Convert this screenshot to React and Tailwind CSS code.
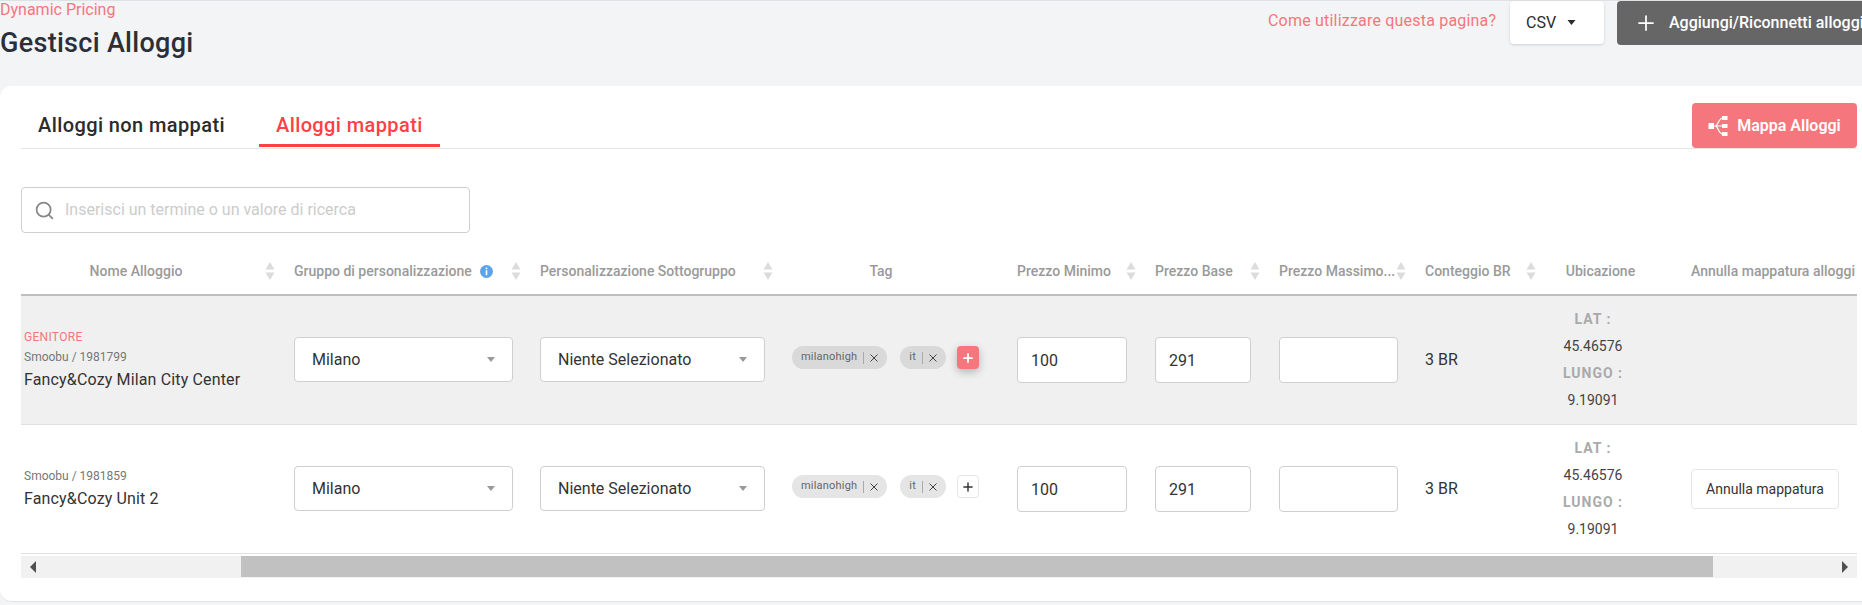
import { Plus, Search } from "lucide-react";

const colsClass =
  "grid grid-cols-[259px_246px_252px_225px_138px_124px_146px_130px_136px_180px]";

const rows = [
  {
    parent: true,
    source: "Smoobu / 1981799",
    name: "Fancy&Cozy Milan City Center",
  },
  {
    parent: false,
    source: "Smoobu / 1981859",
    name: "Fancy&Cozy Unit 2",
  },
];

function SortIcon() {
  return (
    <svg width="10" height="18" viewBox="0 0 10 18" className="shrink-0">
      <path d="M5 0 L9.5 7.5 H0.5 Z" fill="#dcdcdc" />
      <path d="M5 18 L9.5 10.5 H0.5 Z" fill="#dcdcdc" />
    </svg>
  );
}

function Caret({ color = "#999999", w = 8, h = 5 }) {
  return (
    <svg width={w} height={h} viewBox="0 0 8 5" className="shrink-0">
      <path d="M0 0 H8 L4 5 Z" fill={color} />
    </svg>
  );
}

function MapIcon() {
  return (
    <svg width="20" height="22" viewBox="0 0 20 22" fill="none" className="shrink-0">
      <rect x="0.5" y="8" width="5.5" height="6" fill="#fff" />
      <rect x="14" y="1" width="5.5" height="4" fill="#fff" />
      <rect x="14" y="9" width="5.5" height="4" fill="#fff" />
      <rect x="14" y="17" width="5.5" height="4" fill="#fff" />
      <path d="M6 11 H14 M15 3 C11 3 11 8 8 11 C11 14 11 19 15 19" stroke="#fff" strokeWidth="1.2" />
    </svg>
  );
}

function HeaderCell({ label, sort = true, children, textClass = "" }) {
  return (
    <div className="flex items-center pl-[14px] pr-[5px]">
      <div className={`flex flex-1 items-center whitespace-nowrap ${textClass}`}>
        {label}
        {children}
      </div>
      {sort && <SortIcon />}
    </div>
  );
}

function Select({ label }) {
  return (
    <div className="flex h-[45px] w-full items-center justify-between rounded-[4px] border border-[#cfcfcf] bg-white px-[17px] text-[16px] text-[#333]">
      {label}
      <Caret />
    </div>
  );
}

function NumberInput({ value, width }) {
  return (
    <input
      readOnly
      value={value}
      className={`h-[46px] ${width} rounded-[4px] border border-[#cfcfcf] bg-white px-[13px] text-[16px] text-[#333] outline-none`}
    />
  );
}

function Tag({ label, parent }) {
  return (
    <div
      className={`flex h-[23px] items-center rounded-full px-[9px] text-[11px] tracking-[0.2px] text-[#666] ${
        parent ? "bg-[#d9d9d9]" : "bg-[#e5e5e5]"
      }`}
    >
      {label}
      <span className="mx-[6px] h-[12px] w-px bg-[#aaa]" />
      <svg width="8" height="8" viewBox="0 0 8 8" className="mt-[1px] shrink-0">
        <path d="M0.5 0.5 L7.5 7.5 M7.5 0.5 L0.5 7.5" stroke="#444" strokeWidth="1" />
      </svg>
    </div>
  );
}

function Row({ row }) {
  return (
    <div className={`${colsClass} h-[129px] items-center border-b border-[#e0e0e0] ${row.parent ? "bg-[#f0f0f0]" : "bg-white"}`}>
      <div className="pl-[3px]">
        {row.parent && <div className="mb-[6px] text-[12px] leading-[14px] tracking-[0.3px] text-[#f5767c]">GENITORE</div>}
        <div className="text-[12px] leading-[14px] text-[#777]">{row.source}</div>
        <div className="mt-[6px] text-[16px] leading-[20px] tracking-[0.15px] text-[#333]">{row.name}</div>
      </div>
      <div className="pb-px pl-[14px] pr-[13px]">
        <Select label="Milano" />
      </div>
      <div className="pb-px pl-[14px] pr-[13px]">
        <Select label="Niente Selezionato" />
      </div>
      <div className="flex items-center pb-[5px] pl-[14px]">
        <Tag label="milanohigh" parent={row.parent} />
        <div className="ml-[13px]">
          <Tag label="it" parent={row.parent} />
        </div>
        {row.parent ? (
          <button className="ml-[11px] flex h-[23px] w-[22px] items-center justify-center rounded-[4px] bg-[#f5767c] text-white shadow-[0_3px_8px_rgba(0,0,0,0.25)]">
            <Plus size={14} strokeWidth={3} />
          </button>
        ) : (
          <button className="ml-[11px] flex h-[23px] w-[22px] items-center justify-center rounded-[4px] border border-[#e5e5e5] bg-white text-[#333]">
            <Plus size={14} strokeWidth={2.5} />
          </button>
        )}
      </div>
      <div className="pl-[14px]">
        <NumberInput value="100" width="w-[110px]" />
      </div>
      <div className="pl-[14px]">
        <NumberInput value="291" width="w-[96px]" />
      </div>
      <div className="pl-[14px]">
        <NumberInput value="" width="w-[119px]" />
      </div>
      <div className="pl-[14px] text-[16px] text-[#333]">3 BR</div>
      <div className="pr-[32px] text-center text-[14px] leading-[27px] text-[#444]">
        <div className="font-bold tracking-[1px] text-[#aaa]">LAT :</div>
        <div>45.46576</div>
        <div className="font-bold tracking-[1px] text-[#aaa]">LUNGO :</div>
        <div>9.19091</div>
      </div>
      <div className="pl-[14px]">
        {!row.parent && (
          <button className="h-[40px] w-[148px] rounded-[4px] border border-[#e5e5e5] bg-white text-[14px] text-[#333]">
            Annulla mappatura
          </button>
        )}
      </div>
    </div>
  );
}

export default function App() {
  return (
    <div className="h-[605px] w-full overflow-hidden bg-[#f3f4f6] font-['Roboto',sans-serif]">
      {/* Header */}
      <header className="flex h-[86px] border-t border-[#dfe1e5]">
        <div className="w-[1268px] shrink-0">
          <div className="text-[16px] leading-[18px] text-[#f5767c]">Dynamic Pricing</div>
          <h1 className="mt-[9px] text-[27px] font-medium leading-[30px] tracking-[0.3px] text-[#2b2f38]">Gestisci Alloggi</h1>
        </div>
        <a className="mt-[10px] w-[242px] shrink-0 text-[16px] leading-[20px] tracking-[0.2px] text-[#f5767c]">
          Come utilizzare questa pagina?
        </a>
        <button className="flex h-[43px] w-[94px] shrink-0 items-center gap-[11px] rounded-[4px] bg-white pl-[16px] text-[16px] text-[#2b2b2b] shadow-[0_1px_3px_rgba(0,0,0,0.15)]">
          CSV
          <Caret color="#2b2b2b" w={9} h={5} />
        </button>
        <button className="ml-[13px] flex h-[44px] w-[270px] shrink-0 items-center rounded-[4px] bg-[#666] pl-[17px] text-[16px] font-medium whitespace-nowrap text-white">
          <Plus size={24} strokeWidth={1.75} />
          <span className="ml-[11px]">Aggiungi/Riconnetti alloggi</span>
        </button>
      </header>

      {/* Card */}
      <main className="h-[516px] rounded-l-[12px] border-b border-[#e3e3e3] bg-white pl-[21px] pr-[5px] pt-[17px]">
        <div className="flex items-end justify-between border-b border-[#e5e5e5]">
          <div className="mb-px flex gap-[17px]">
            <button className="flex h-[44px] items-center border-y-[3px] border-transparent px-[17px] text-[20px] font-medium tracking-[0.4px] text-[#2b2b2b]">
              Alloggi non mappati
            </button>
            <button className="flex h-[44px] items-center border-t-[3px] border-b-[3px] border-t-transparent border-b-[#ff4045] px-[17px] text-[20px] font-medium tracking-[0.4px] text-[#ff4045]">
              Alloggi mappati
            </button>
          </div>
          <button className="flex h-[45px] w-[165px] items-center justify-center gap-[9px] rounded-[4px] bg-[#f5767c] text-[16px] font-semibold text-white">
            <MapIcon />
            Mappa Alloggi
          </button>
        </div>

        {/* Search */}
        <div className="mt-[38px] flex h-[46px] w-[449px] items-center rounded-[4px] border border-[#cfcfcf] pl-[12px]">
          <Search size={21} strokeWidth={2} className="text-[#888]" />
          <input
            placeholder="Inserisci un termine o un valore di ricerca"
            className="ml-[10px] flex-1 text-[16px] outline-none placeholder:text-[#ccc]"
          />
        </div>

        {/* Table */}
        <div className={`${colsClass} mt-[15px] h-[48px] border-b-2 border-[#bfbfbf] text-[14px] font-medium text-[#9a9a9a]`}>
          <HeaderCell label="Nome Alloggio" textClass="justify-center pr-[28px]" />
          <HeaderCell label="Gruppo di personalizzazione">
            <svg width="13" height="13" viewBox="0 0 13 13" className="ml-[8px] shrink-0">
              <circle cx="6.5" cy="6.5" r="6.5" fill="#5ba4ea" />
              <rect x="5.7" y="2.6" width="1.6" height="1.6" fill="#fff" />
              <rect x="5.7" y="5.2" width="1.6" height="5" fill="#fff" />
            </svg>
          </HeaderCell>
          <HeaderCell label="Personalizzazione Sottogruppo" />
          <HeaderCell label="Tag" sort={false} textClass="justify-center pr-[28px]" />
          <HeaderCell label="Prezzo Minimo" />
          <HeaderCell label="Prezzo Base" />
          <HeaderCell label="Prezzo Massimo..." />
          <HeaderCell label="Conteggio BR" />
          <HeaderCell label="Ubicazione" sort={false} textClass="justify-center pr-[26px]" />
          <HeaderCell label="Annulla mappatura alloggi" sort={false} />
        </div>

        {rows.map((row) => (
          <Row key={row.source} row={row} />
        ))}

        {/* Scrollbar */}
        <div className="mt-[2px] flex h-[22px] bg-[#f1f1f1]">
          <div className="flex h-[21px] w-[220px] items-center pl-[9px]">
            <svg width="6" height="12" viewBox="0 0 6 12">
              <path d="M6 0 V12 L0 6 Z" fill="#505050" />
            </svg>
          </div>
          <div className="h-[21px] w-[1472px] bg-[#c1c1c1]" />
          <div className="flex h-[21px] flex-1 items-center justify-end pr-[9px]">
            <svg width="6" height="12" viewBox="0 0 6 12">
              <path d="M0 0 V12 L6 6 Z" fill="#505050" />
            </svg>
          </div>
        </div>
      </main>
    </div>
  );
}
